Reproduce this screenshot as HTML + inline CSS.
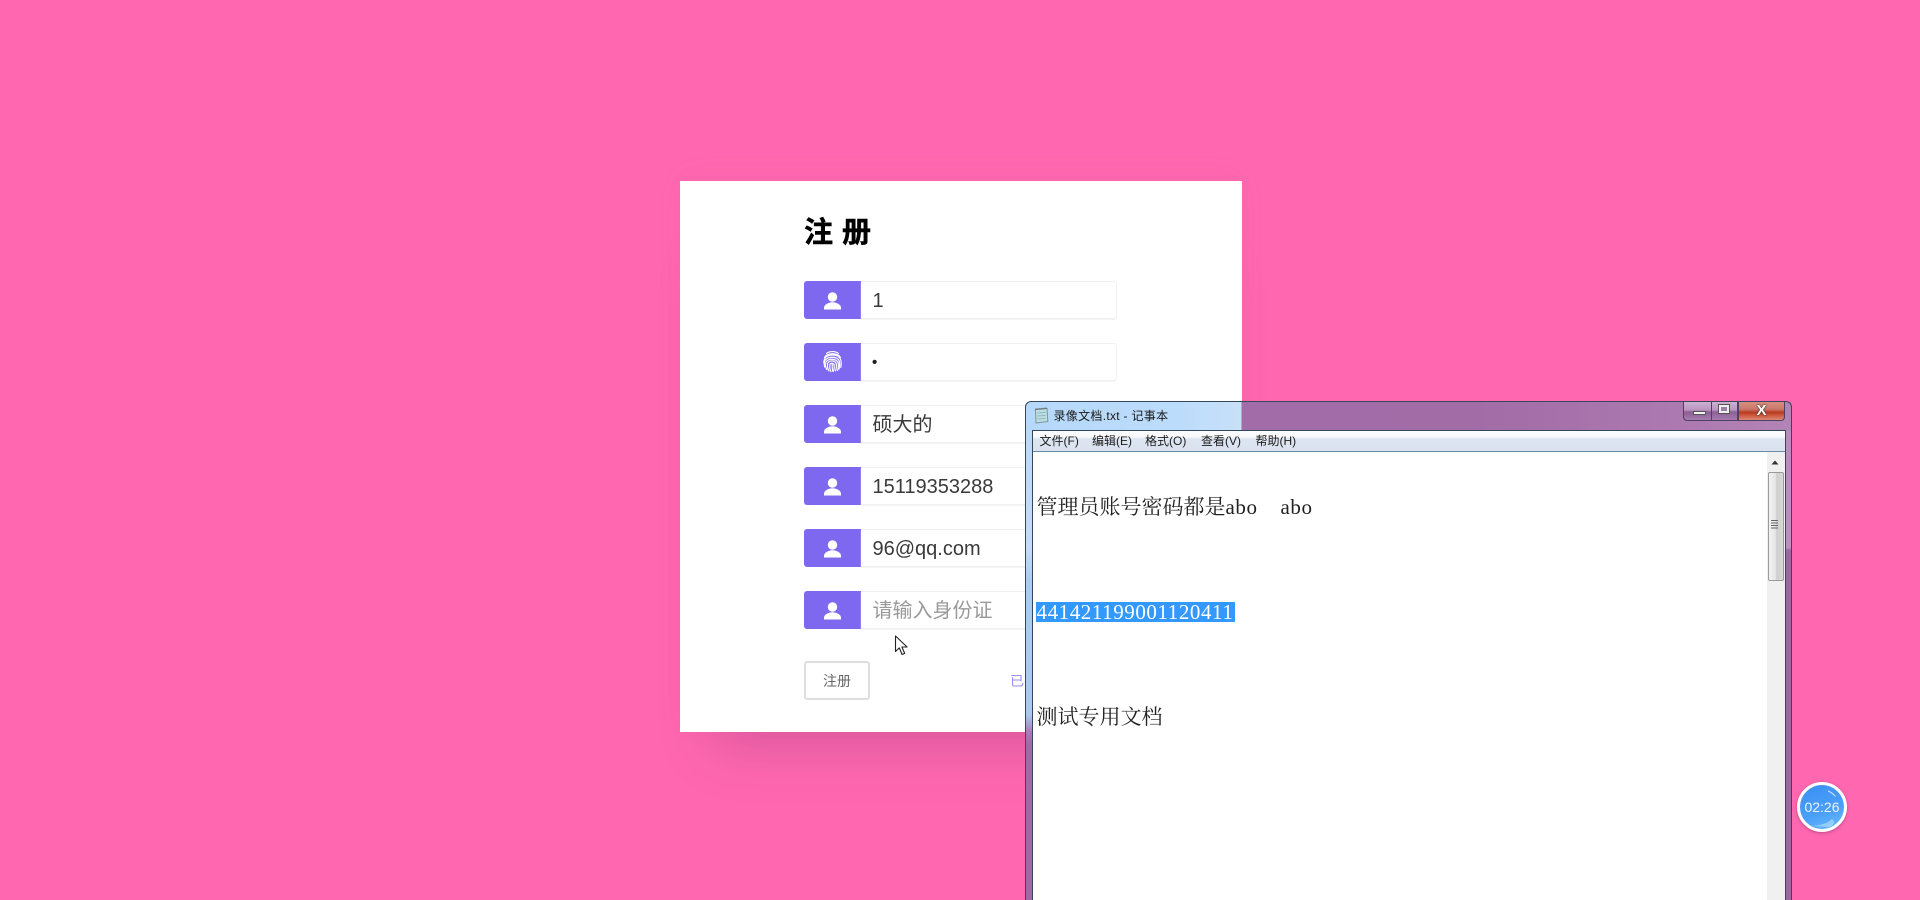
<!DOCTYPE html>
<html lang="zh"><head><meta charset="utf-8"><title>注册</title>
<style>
html,body{margin:0;padding:0;width:1920px;height:900px;overflow:hidden;background:#ff68b0;font-family:"Liberation Sans","Noto Sans CJK SC",sans-serif}
.a{position:absolute}
#card{left:680px;top:181px;width:562px;height:551px;background:#fff;box-shadow:0 48px 50px -34px rgba(120,50,110,.28),0 -6px 30px rgba(190,70,130,.035)}
h1{position:absolute;left:804px;top:213px;margin:0;font-size:29px;line-height:40px;font-weight:700;color:#000;letter-spacing:0;word-spacing:1px;white-space:pre;-webkit-text-stroke:.5px #000}
.ic{position:absolute;left:804px;width:57px;height:38px;background:#7f68f0;border-radius:3px 0 0 3px}
.ic svg{position:absolute;left:0;top:0}
.in{position:absolute;left:861px;width:255px;height:36px;background:#fff;border:1px solid #f1f1f1;border-left:0;border-radius:0 3px 3px 0;box-shadow:0 1px 1px #f3f3f3;font-size:20px;line-height:38px;color:#3a3a3a;text-indent:11.5px}
#btn{left:804px;top:661px;width:62px;height:35px;border:2px solid #dedede;border-radius:3px;font-size:14px;line-height:36px;text-align:center;color:#666}
#lnk{left:1010px;top:671px;font-size:14px;line-height:20px;color:#9b8bee;white-space:nowrap}
#win{left:1025px;top:401px;width:767px;height:499px;border:1px solid #34485c;border-bottom:0;border-radius:6px 6px 0 0;box-sizing:border-box;overflow:hidden;background:linear-gradient(90deg,#b6d8fa 0,#bcdcfb 150px,#c8e0f8 215px,#a26ca8 216px,#a26ca7 450px,#ac79b0 650px,#b284b6 100%)}
#lb{left:1026px;top:732px;width:6px;height:168px;background:linear-gradient(#a87cb8,#a06aa5 12px)}
#lb2{left:1026px;top:430px;width:6px;height:302px;background:linear-gradient(#bcd9f6,#c4dcf5 120px,#a9cdf2 150px,#a9c9ef 285px,#a87cb8)}
#rb{left:1786px;top:430px;width:5px;height:470px;background:linear-gradient(#b98bbd,#bb90bf 118px,#9c68a2 120px,#9c68a2)}
#inner{left:1032px;top:430px;width:754px;height:470px;box-sizing:border-box;border:1px solid #33475e;border-bottom:0;background:#fff}
#menu{left:1033px;top:431px;width:752px;height:20px;background:linear-gradient(#fdfdfe,#f7f9fc 6px,#dde5f1 8px,#dae2ef);border-bottom:1px solid #6b8aa5}
.m{position:absolute;top:433px;font-size:12px;line-height:17px;color:#1c1c1c;white-space:nowrap}
#ttl{left:1053.5px;top:407px;font-size:12px;line-height:18px;color:#1a1a1a;white-space:nowrap;letter-spacing:.3px}
.t{position:absolute;left:1036.5px;font-family:"Liberation Serif","Noto Serif CJK SC",serif;font-size:21px;line-height:24px;color:#222;white-space:pre}
.lat{letter-spacing:.6px}
#sel{left:1036px;top:601.5px;width:199px;height:20px;background:#3399ff}
#num{left:1036.5px;top:600px;font-family:"Liberation Serif",serif;font-size:21px;letter-spacing:.57px;line-height:24px;color:#fff;white-space:pre}
#sb{left:1767px;top:452px;width:18px;height:448px;background:#f0f0f0}
#th{left:1768px;top:471.5px;width:14px;height:107px;border:1px solid #9a9a9a;border-radius:2px;background:linear-gradient(90deg,#f2f2f2,#e6e6e6 45%,#cfcfcf 55%,#d8d8d8)}
.cap{position:absolute;top:402px;height:19px;box-sizing:border-box;border:1px solid #4f3f60;border-top:0}
#timer{left:1797px;top:781.5px;width:50px;height:50px;box-sizing:border-box;border:3px solid #fff;border-radius:50%;background:linear-gradient(160deg,#3b8ef4,#4aa0f8 60%,#6cbcfb);box-shadow:0 1px 3px rgba(120,40,90,.5);color:#eaf4ff;font-size:14px;line-height:44px;text-align:center;overflow:hidden}
</style></head><body>
<div class="a" id="card"></div>
<h1>注 册</h1>

<div class="ic" style="top:281px"><svg width="57" height="38" viewBox="0 0 57 38"><circle cx="28.5" cy="16" r="4.7" fill="#fff"/><path d="M20 28.500v-1.800c0-3.500 5-5.500 8.500-5.500s8.500 2 8.500 5.500v1.800z" fill="#fff"/></svg></div>
<div class="in" style="top:281px">1</div>

<div class="ic" style="top:343px"><svg width="57" height="38" viewBox="0 0 57 38" fill="none" stroke="#fff" stroke-linecap="round" stroke-width="1.150"><path d="M22.500 10.500c3-2.600 9-2.600 12 0"/><path d="M20.500 14.500c3-5 13-5 16 0"/><path d="M19.800 20c0-5.500 3.500-8 8.700-8s8.700 2.500 8.700 8c0 1.500 0 3-.4 4.500"/><path d="M20.800 24c-.7-2-.7-4-.3-5.500 1.500-5.500 14-6 15 .5 .3 2.500 .2 5-.5 7"/><path d="M22.800 26.500c-1.300-2-1.500-5-1-7 1.500-4.500 11.500-4.500 12.500 1 .3 2.500 0 5-.8 7"/><path d="M25 28c-1.500-2.500-1.800-5-1.300-7.500 1-3.500 8-3.500 8.600 .5 .3 2.500 0 5-.8 6.800"/><path d="M27 28.500c-1.300-2-1.500-4.500-1-7 .5-1.800 3.800-1.500 4.200.5 .2 2.500-.2 5-1 6.500"/><path d="M28.200 21.500c0 2.500 0 4.500 .5 6.500"/></svg></div>
<div class="in" style="top:343px;font-weight:700;font-size:15px;color:#222;text-indent:11px;line-height:37px">•</div>

<div class="ic" style="top:405px"><svg width="57" height="38" viewBox="0 0 57 38"><circle cx="28.5" cy="16" r="4.7" fill="#fff"/><path d="M20 28.500v-1.800c0-3.500 5-5.500 8.500-5.500s8.500 2 8.500 5.500v1.800z" fill="#fff"/></svg></div>
<div class="in" style="top:405px">硕大的</div>

<div class="ic" style="top:467px"><svg width="57" height="38" viewBox="0 0 57 38"><circle cx="28.5" cy="16" r="4.7" fill="#fff"/><path d="M20 28.500v-1.800c0-3.500 5-5.500 8.500-5.500s8.500 2 8.500 5.500v1.800z" fill="#fff"/></svg></div>
<div class="in" style="top:467px">15119353288</div>

<div class="ic" style="top:529px"><svg width="57" height="38" viewBox="0 0 57 38"><circle cx="28.5" cy="16" r="4.7" fill="#fff"/><path d="M20 28.500v-1.800c0-3.500 5-5.500 8.500-5.500s8.500 2 8.500 5.500v1.800z" fill="#fff"/></svg></div>
<div class="in" style="top:529px">96@qq.com</div>

<div class="ic" style="top:591px"><svg width="57" height="38" viewBox="0 0 57 38"><circle cx="28.5" cy="16" r="4.7" fill="#fff"/><path d="M20 28.500v-1.800c0-3.500 5-5.500 8.500-5.500s8.500 2 8.500 5.500v1.800z" fill="#fff"/></svg></div>
<div class="in" style="top:591px;color:#999">请输入身份证</div>

<div class="a" id="btn">注册</div>
<div class="a" id="lnk">已有账号</div>
<svg class="a" style="left:894px;top:635px" width="16" height="21" viewBox="0 0 16 21"><path d="M1.500 1v15.500l3.800-3.600 2.800 6.600 2.600-1.100-2.800-6.400h5.200z" fill="#fff" stroke="#222" stroke-width="1.100" stroke-linejoin="round"/></svg>

<div class="a" id="win"></div>
<div class="a" id="lb2"></div>
<div class="a" id="lb"></div>
<div class="a" id="rb"></div>

<svg class="a" style="left:1034px;top:407px" width="15" height="17" viewBox="0 0 15 17"><path d="M1.500 2.500l11.500-1 .8 13-11.800 1.500z" fill="#bcdedf" stroke="#7c949c"/><path d="M3.500 6l8-.6M3.500 9l8-.6M3.500 12l8-.6" stroke="#8fb7c2" stroke-width="1"/><path d="M1.500 2.200l11.500-1" stroke="#555" stroke-dasharray="1 1" stroke-width="1.500"/></svg>
<div class="a" id="ttl">录像文档.txt - 记事本</div>

<div class="cap" style="left:1683px;width:29px;border-radius:0 0 0 4px;background:linear-gradient(#cdb0d2,#b995bf 45%,#8d6096 55%,#a57aad)"><div class="a" style="left:9px;top:9px;width:11px;height:2px;background:#f2f2f2;border:1px solid #555"></div></div>
<div class="cap" style="left:1711px;width:27px;background:linear-gradient(#cdb0d2,#b995bf 45%,#8d6096 55%,#a57aad)"><div class="a" style="left:7px;top:3px;width:6px;height:4px;border:2px solid #eee;outline:1px solid #555;background:#9a80a5"></div></div>
<div class="cap" style="left:1738px;width:47px;border-radius:0 0 4px 0;background:linear-gradient(#d98d7e,#c9796a 40%,#b83a22 58%,#cf5a3e 75%,#d98a78);color:#fff;font:700 15px/17px 'Liberation Sans',sans-serif;text-align:center;text-shadow:0 0 1px #333,0 0 2px #333">X</div>

<div class="a" id="inner"></div>
<div class="a" id="menu"></div>
<div class="m" style="left:1039.5px">文件(F)</div>
<div class="m" style="left:1092px">编辑(E)</div>
<div class="m" style="left:1145px">格式(O)</div>
<div class="m" style="left:1201px">查看(V)</div>
<div class="m" style="left:1255.5px">帮助(H)</div>

<div class="t" style="top:495px">管理员账号密码都是<span class="lat">abo</span></div>
<div class="t lat" style="top:495px;left:1280.5px">abo</div>
<div class="a" id="sel"></div>
<div class="a" id="num">441421199001120411</div>
<div class="t" style="top:705px">测试专用文档</div>

<div class="a" id="sb"></div>
<svg class="a" style="left:1767px;top:458px" width="16" height="8" viewBox="0 0 16 8"><path d="M4.500 6.500l3.500-4 3.500 4z" fill="#333"/></svg>
<div class="a" id="th"></div>
<svg class="a" style="left:1769px;top:519px" width="14" height="11" viewBox="0 0 14 11"><path d="M1 1.500h7M1 4h7M1 6.500h7M1 9h7" stroke="#666" transform="translate(1 0)"/></svg>

<div class="a" id="timer">02:26<svg style="position:absolute;left:0;top:0" width="44" height="44" viewBox="0 0 44 44" fill="none"><path d="M28 6c3 1.200 5.500 3 7.500 5.500" stroke="#cfe6fd" stroke-width="1"/><path d="M12 41c9-1 15-2 20-7 3 3 3 5-2 8z" fill="#9fd3fc" stroke="none" opacity=".85"/></svg></div>
</body></html>
